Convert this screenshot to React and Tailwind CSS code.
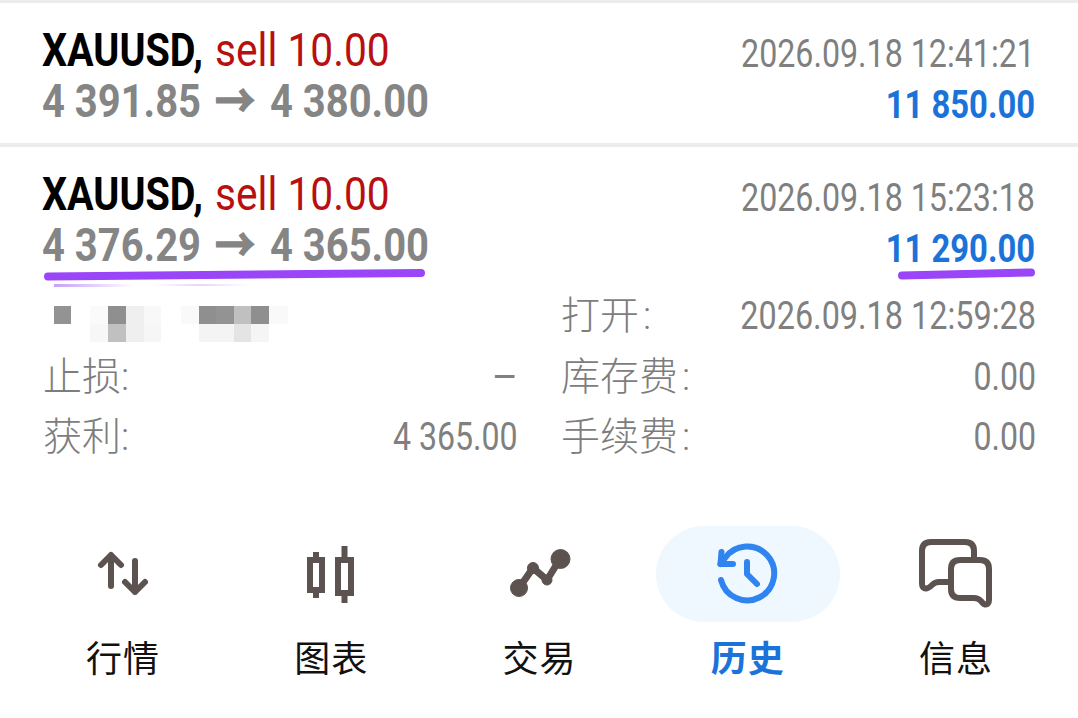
import React from "react";

const F = { fontFamily: "Roboto, 'Noto Sans CJK SC', sans-serif" };

function Deal({ t1, t2, date, amt }) {
  return (
    <div className="flex justify-between pl-[42px] pr-[43px] h-[140px] pt-[22px]">
      <div className="flex flex-col">
        <div className="flex h-[51px] leading-[51px] text-[46px] whitespace-nowrap">
          <span className="w-[173px] font-bold text-black origin-left scale-x-[0.86]">XAUUSD,</span>
          <span className="text-[#b80f10] origin-left scale-x-[0.885]">sell 10.00</span>
        </div>
        <div className="flex h-[51px] leading-[51px] text-[46px] font-bold text-[#858585] whitespace-nowrap">
          <span className="w-[173px] origin-left scale-x-[0.868]">{t1}</span>
          <span className="w-[55px] origin-left scale-x-[0.87] [-webkit-text-stroke:1.5px_#858585]">→</span>
          <span className="origin-left scale-x-[0.868]">{t2}</span>
        </div>
      </div>
      <div className="flex flex-col items-end">
        <div className="h-[56px] pt-[4px] leading-[51px] text-[38px] text-[#7f7f7f] whitespace-nowrap origin-right scale-x-[0.847]">{date}</div>
        <div className="h-[46px] pt-[1px] leading-[46px] text-[38px] font-bold text-[#1b72d8] whitespace-nowrap origin-right scale-x-[0.863]">{amt}</div>
      </div>
    </div>
  );
}

function Num({ children, kind }) {
  const s = kind === "dash" ? "scale-x-[1.05]" : kind === "date" ? "scale-x-[0.852]" : "scale-x-[0.845]";
  return <span className={`text-[38px] leading-[60px] text-[#808080] whitespace-nowrap origin-right ${s}`}>{children}</span>;
}
function Label({ children, colon }) {
  return (
    <span className="text-[39px] leading-[60px] font-light text-[#7d7d7d] whitespace-nowrap">
      {children}
      <span className={colon ? "ml-[4px]" : ""}>:</span>
    </span>
  );
}

const cells = (row) =>
  row.map(([w, c], i) => <div key={i} className="h-[18px]" style={{ width: w, backgroundColor: c }} />);

function Mosaic() {
  const a = [[17, "#939393"]];
  const b1 = [[18, "#fafafa"], [18, "#8f8f8f"], [18, "#efefef"], [17, "#f8f8f8"]];
  const b2 = [[18, "#f7f7f7"], [18, "#c0c0c0"], [18, "#efefef"], [17, "#f6f6f6"]];
  const c1 = [[18, "#f9f9f9"], [17, "#8f8f8f"], [18, "#939393"], [17, "#c0c0c0"], [18, "#8f8f8f"], [19, "#f9f9f9"]];
  const c2 = [[18, "#ffffff"], [17, "#f4f4f4"], [18, "#f4f4f4"], [17, "#e4e4e4"], [18, "#f5f5f5"], [19, "#ffffff"]];
  return (
    <div className="flex items-start pt-[20px] pl-[54px]">
      <div className="flex">{cells(a)}</div>
      <div className="flex flex-col ml-[19px]"><div className="flex">{cells(b1)}</div><div className="flex">{cells(b2)}</div></div>
      <div className="flex flex-col ml-[20px]"><div className="flex">{cells(c1)}</div><div className="flex">{cells(c2)}</div></div>
    </div>
  );
}

const ICON = "#5c5350";
const BLUE = "#2f84f0";

const icons = {
  quotes: (
    <svg width="80" height="80" viewBox="82 534 80 80" fill="none" stroke={ICON} strokeWidth="6" strokeLinecap="round" strokeLinejoin="round">
      <path d="M110 586V555M100 565L110 555L120 565" />
      <path d="M134 561V592M124 582L134 592L144 582" />
    </svg>
  ),
  chart: (
    <svg width="80" height="80" viewBox="291 534 80 80" fill="none" stroke={ICON} strokeWidth="6">
      <rect x="310" y="560" width="12" height="30" />
      <rect x="338" y="560" width="13" height="33" />
      <path d="M316 552V560M316 590V598M344.500 546V560M344.500 593V603" />
    </svg>
  ),
  trade: (
    <svg width="80" height="80" viewBox="499 534 80 80" fill={ICON} stroke={ICON}>
      <path d="M518 588L532 568L546 580L559 559" fill="none" strokeWidth="7" />
      <circle cx="518" cy="588" r="8.500" />
      <circle cx="532" cy="568" r="5.500" />
      <circle cx="546" cy="580" r="5" />
      <circle cx="559.500" cy="559" r="9.500" />
    </svg>
  ),
  history: (
    <svg width="80" height="80" viewBox="708 534 80 80" fill="none" stroke={BLUE} strokeWidth="6" strokeLinecap="round" strokeLinejoin="round">
      <path d="M721 580A27 27 0 1 0 725 558L720.500 564" />
      <path d="M721.500 552L720.500 564L733 564" />
      <path d="M747 562V574L757 584" />
    </svg>
  ),
  msg: (
    <svg width="80" height="80" viewBox="917 534 80 80" fill="none" stroke={ICON} strokeWidth="6" strokeLinecap="round" strokeLinejoin="round">
      <path d="M951 582H940Q936 582 933 585Q928 590 925 588Q923 587 923 583V551Q923 542 932 542H966Q975 542 975 551V560" />
      <path d="M961 560H981Q990 560 990 569V600Q990 605 986 604.500Q984 604 982 601Q979 598 975 598H961Q952 598 952 589V569Q952 560 961 560Z" />
    </svg>
  ),
};

function NavItem({ icon, label, active }) {
  return (
    <div className="flex-1 flex flex-col items-center">
      <div className={`w-[184px] h-[96px] rounded-[48px] flex items-center justify-center ${active ? "bg-[#eff7ff]" : ""}`}>
        {icons[icon]}
      </div>
      <div className={`mt-[16px] text-[36px] leading-[44px] tracking-[1px] ${active ? "font-bold text-[#1b72d8]" : "text-[#111111]"}`}>{label}</div>
    </div>
  );
}

export default function App() {
  return (
    <div className="relative w-[1078px] h-[718px] overflow-hidden bg-white" style={F}>
      <div className="h-[3px] bg-[#ececec]" />
      <Deal t1="4 391.85" t2="4 380.00" date="2026.09.18 12:41:21" amt="11 850.00" />
      <div className="h-[4px] bg-[#ececec]" />
      <Deal t1="4 376.29" t2="4 365.00" date="2026.09.18 15:23:18" amt="11 290.00" />
      <div className="mt-[-1px] grid grid-cols-[518px_518px] auto-rows-[60.5px]">
        <Mosaic />
        <div className="flex justify-between pl-[43px]"><Label colon>打开</Label><Num kind="date">2026.09.18 12:59:28</Num></div>
        <div className="flex justify-between pl-[43px]"><Label>止损</Label><Num kind="dash">–</Num></div>
        <div className="flex justify-between pl-[43px]"><Label colon>库存费</Label><Num>0.00</Num></div>
        <div className="flex justify-between pl-[43px]"><Label>获利</Label><Num>4 365.00</Num></div>
        <div className="flex justify-between pl-[43px]"><Label colon>手续费</Label><Num>0.00</Num></div>
      </div>
      <div className="mt-[58px] flex pl-[19px] pr-[18px]">
        <NavItem icon="quotes" label="行情" />
        <NavItem icon="chart" label="图表" />
        <NavItem icon="trade" label="交易" />
        <NavItem icon="history" label="历史" active />
        <NavItem icon="msg" label="信息" />
      </div>
      <svg className="absolute left-0 top-0 pointer-events-none" width="1078" height="718" fill="none" strokeLinecap="round">
        <defs>
          <linearGradient id="s1" x1="0" x2="1" y1="0" y2="0">
            <stop offset="0" stopColor="#c9a0f8" />
            <stop offset="1" stopColor="#ffffff" />
          </linearGradient>
          <linearGradient id="s2" x1="0" x2="1" y1="0" y2="0">
            <stop offset="0" stopColor="#ffffff" />
            <stop offset="0.5" stopColor="#e6d6fb" />
            <stop offset="1" stopColor="#ffffff" />
          </linearGradient>
        </defs>
        <path d="M48 276.500L421 273" stroke="#9b45f8" strokeWidth="8" />
        <path d="M902 275.500L1031 272.500" stroke="#9b45f8" strokeWidth="8" />
        <rect x="54" y="284" width="80" height="3" fill="url(#s1)" />
        <rect x="150" y="284" width="100" height="2" fill="url(#s2)" />
      </svg>
    </div>
  );
}
